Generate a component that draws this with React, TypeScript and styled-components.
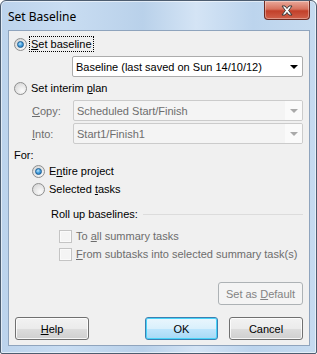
import React from "react";
import styled, { createGlobalStyle } from "styled-components";

const GlobalStyle = createGlobalStyle`
  html, body {
    margin: 0;
    padding: 0;
    background: #ffffff;
  }
  body {
    font-family: "Liberation Sans", Arial, sans-serif;
    font-size: 11px;
  }
`;

const Window = styled.div`
  width: 317px;
  height: 354px;
  box-sizing: border-box;
  border: 1px solid #4d5d70;
  border-radius: 6px 6px 2px 2px;
  background: linear-gradient(
    90deg,
    #bcd3ec 0%,
    #c9ddf2 20%,
    #b9d1ea 45%,
    #d4e4f5 62%,
    #bcd4ed 80%,
    #c6dbf0 100%
  );
  box-shadow: inset 0 0 0 1px rgba(255, 255, 255, 0.55);
  display: flex;
  flex-direction: column;
  overflow: hidden;
`;

const TitleBar = styled.div`
  height: 29px;
  display: flex;
  align-items: flex-start;
  justify-content: space-between;
  padding: 0 6px 0 7px;
`;

const Title = styled.div`
  font-family: "Noto Sans", "Liberation Sans", sans-serif;
  font-size: 12px;
  color: #000;
  padding-top: 7px;
`;

const CloseButton = styled.div`
  width: 46px;
  height: 19px;
  box-sizing: border-box;
  border: 1px solid #6e2b22;
  border-top: none;
  border-radius: 0 0 4px 4px;
  background: linear-gradient(180deg, #e9a99b 0%, #d7725e 45%, #c2402a 55%, #d0604a 100%);
  box-shadow: inset 0 0 0 1px rgba(255, 255, 255, 0.35);
  display: flex;
  align-items: center;
  justify-content: center;
`;

const Client = styled.div`
  flex: 1;
  margin: 0 6px 7px 7px;
  background: #f0f0f0;
  border: 1px solid #8fa4bd;
  display: flex;
  flex-direction: column;
`;

const Row = styled.div<{ $top: number; $left: number; $h?: number }>`
  margin-top: ${(p) => p.$top}px;
  padding-left: ${(p) => p.$left}px;
  padding-right: 6px;
  height: ${(p) => p.$h ?? 16}px;
  display: flex;
  align-items: center;
`;

const Label = styled.span<{ $disabled?: boolean; $focus?: boolean }>`
  color: ${(p) => (p.$disabled ? "#6d6d6d" : "#000")};
  white-space: nowrap;
  line-height: 14px;
  padding: 0 1px;
  outline: ${(p) => (p.$focus ? "1px dotted #000" : "none")};
  u {
    text-decoration: underline;
    text-underline-offset: 1px;
  }
`;

const Radio = styled.span<{ $checked?: boolean }>`
  width: 13px;
  height: 13px;
  box-sizing: border-box;
  border-radius: 50%;
  border: 1px solid #8e8f8f;
  background: radial-gradient(circle at 65% 70%, #fbfbfb 0%, #e4e4e4 55%, #cfcfcf 100%);
  margin-right: 3px;
  flex: none;
  display: flex;
  align-items: center;
  justify-content: center;
  &::after {
    content: "";
    display: ${(p) => (p.$checked ? "block" : "none")};
    width: 7px;
    height: 7px;
    border-radius: 50%;
    box-sizing: border-box;
    border: 1px solid #1b5d93;
    background: radial-gradient(circle at 40% 35%, #bfe5fb 0%, #4aa3df 45%, #1c6eb5 100%);
  }
`;

const Check = styled.span`
  width: 13px;
  height: 13px;
  box-sizing: border-box;
  border: 1px solid #c4c4c4;
  background: #f4f4f4;
  box-shadow: inset 0 0 0 1px #fafafa;
  margin-right: 3px;
  flex: none;
`;

const Combo = styled.div<{ $disabled?: boolean }>`
  flex: 1;
  height: 21px;
  box-sizing: border-box;
  border: 1px solid ${(p) => (p.$disabled ? "#cbcbcb" : "#acacac")};
  border-radius: 2px;
  background: ${(p) => (p.$disabled ? "#f4f4f4" : "#ffffff")};
  display: flex;
  align-items: center;
  color: ${(p) => (p.$disabled ? "#6d6d6d" : "#000")};
  overflow: hidden;
`;

const ComboText = styled.span`
  flex: 1;
  padding-left: 3px;
  white-space: nowrap;
`;

const ComboArrow = styled.span<{ $disabled?: boolean }>`
  width: 17px;
  height: 100%;
  display: flex;
  align-items: center;
  justify-content: center;
  background: ${(p) => (p.$disabled ? "#fafafa" : "transparent")};
  &::after {
    content: "";
    border-left: 4px solid transparent;
    border-right: 4px solid transparent;
    border-top: 4px solid ${(p) => (p.$disabled ? "#a9a9a9" : "#000")};
  }
`;

const FieldLabel = styled(Label)`
  width: 40px;
`;

const Separator = styled.div`
  flex: 1;
  height: 1px;
  background: #dcdcdc;
  margin-left: 4px;
`;

const ButtonRow = styled.div<{ $top: number }>`
  margin-top: ${(p) => p.$top}px;
  padding: 0 6px 0 6px;
  display: flex;
  align-items: center;
`;

const Spacer = styled.div`
  flex: 1;
`;

const Button = styled.div<{ $variant?: "default" | "disabled"; $w: number; $gap?: number }>`
  width: ${(p) => p.$w}px;
  height: 23px;
  margin-left: ${(p) => p.$gap ?? 0}px;
  box-sizing: border-box;
  border: 1px solid
    ${(p) =>
      p.$variant === "default" ? "#3c7fb1" : p.$variant === "disabled" ? "#adb2b5" : "#707070"};
  border-radius: 3px;
  background: ${(p) =>
    p.$variant === "default"
      ? "linear-gradient(180deg, #eaf6fd 0%, #d9f0fc 50%, #bee6fd 51%, #a7d9f5 100%)"
      : p.$variant === "disabled"
      ? "#f4f4f4"
      : "linear-gradient(180deg, #f2f2f2 0%, #ebebeb 50%, #dddddd 51%, #cfcfcf 100%)"};
  box-shadow: ${(p) =>
    p.$variant === "disabled"
      ? "none"
      : p.$variant === "default"
      ? "inset 0 0 0 1px #48d4f9"
      : "inset 0 0 0 1px rgba(255,255,255,0.8)"};
  color: ${(p) => (p.$variant === "disabled" ? "#838383" : "#000")};
  display: flex;
  align-items: center;
  justify-content: center;
  white-space: nowrap;
  u {
    text-decoration: underline;
  }
`;

const CloseGlyph = () => (
  <svg width="14" height="11" viewBox="0 0 14 11">
    <path
      d="M2 1 L5 1 L7 3.5 L9 1 L12 1 L8.6 5.5 L12 10 L9 10 L7 7.5 L5 10 L2 10 L5.4 5.5 Z"
      fill="#ffffff"
      stroke="#3a3a3a"
      strokeWidth="1"
      strokeLinejoin="round"
    />
  </svg>
);

export default function App() {
  return (
    <>
      <GlobalStyle />
      <Window>
        <TitleBar>
          <Title>Set Baseline</Title>
          <CloseButton>
            <CloseGlyph />
          </CloseButton>
        </TitleBar>
        <Client>
          <Row $top={5} $left={5}>
            <Radio $checked />
            <Label $focus>
              <u>S</u>et baseline
            </Label>
          </Row>
          <Row $top={4} $left={63} $h={21}>
            <Combo>
              <ComboText>Baseline (last saved on Sun 14/10/12)</ComboText>
              <ComboArrow />
            </Combo>
          </Row>
          <Row $top={3} $left={5}>
            <Radio />
            <Label>
              Set interim <u>p</u>lan
            </Label>
          </Row>
          <Row $top={4} $left={22} $h={21}>
            <FieldLabel $disabled>
              <u>C</u>opy:
            </FieldLabel>
            <Combo $disabled>
              <ComboText>Scheduled Start/Finish</ComboText>
              <ComboArrow $disabled />
            </Combo>
          </Row>
          <Row $top={2} $left={22} $h={21}>
            <FieldLabel $disabled>
              <u>I</u>nto:
            </FieldLabel>
            <Combo $disabled>
              <ComboText>Start1/Finish1</ComboText>
              <ComboArrow $disabled />
            </Combo>
          </Row>
          <Row $top={3} $left={4}>
            <Label>For:</Label>
          </Row>
          <Row $top={0} $left={23}>
            <Radio $checked />
            <Label>
              E<u>n</u>tire project
            </Label>
          </Row>
          <Row $top={2} $left={23}>
            <Radio />
            <Label>
              Selected <u>t</u>asks
            </Label>
          </Row>
          <Row $top={9} $left={41}>
            <Label>Roll up baselines:</Label>
            <Separator />
          </Row>
          <Row $top={6} $left={50}>
            <Check />
            <Label $disabled>
              To <u>a</u>ll summary tasks
            </Label>
          </Row>
          <Row $top={2} $left={50}>
            <Check />
            <Label $disabled>
              <u>F</u>rom subtasks into selected summary task(s)
            </Label>
          </Row>
          <ButtonRow $top={20}>
            <Spacer />
            <Button $variant="disabled" $w={85}>
              <span>
                Set as <u>D</u>efault
              </span>
            </Button>
          </ButtonRow>
          <ButtonRow $top={12}>
            <Button $w={74}>
              <span>
                <u>H</u>elp
              </span>
            </Button>
            <Spacer />
            <Button $variant="default" $w={73}>
              OK
            </Button>
            <Button $w={74} $gap={11}>
              Cancel
            </Button>
          </ButtonRow>
        </Client>
      </Window>
    </>
  );
}
